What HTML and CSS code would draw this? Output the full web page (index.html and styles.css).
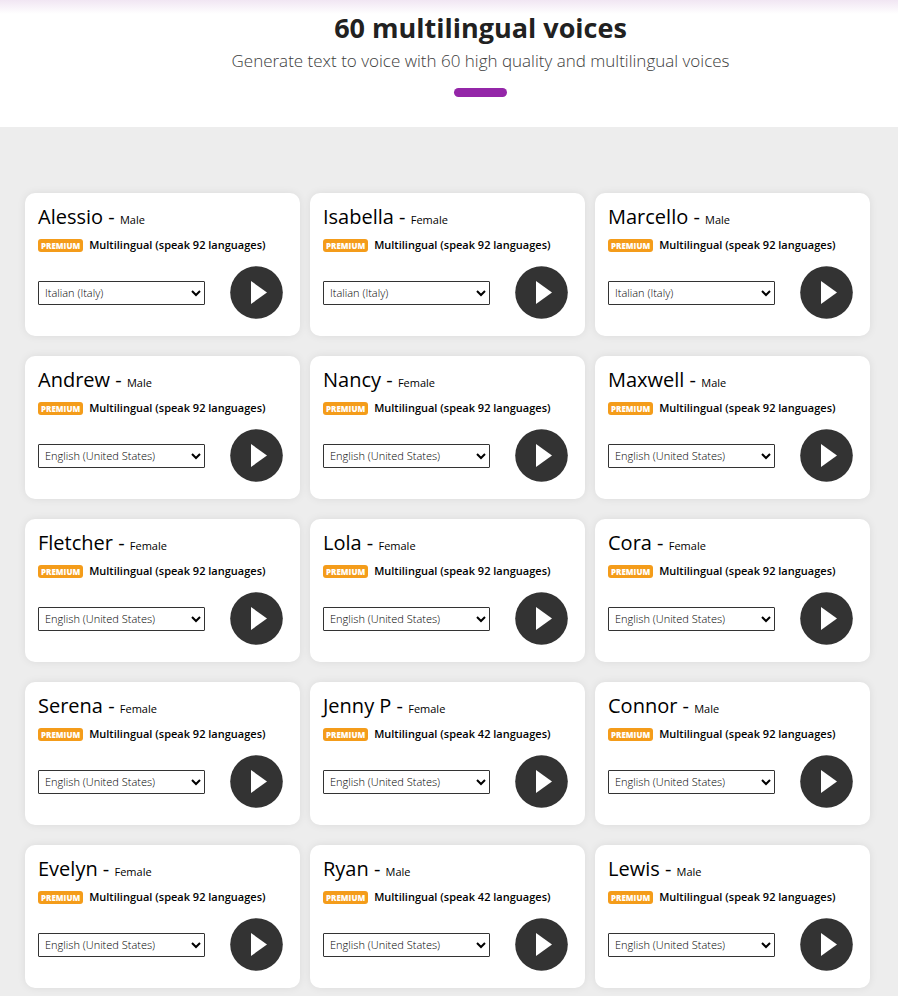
FILE: index.html
```html
<!DOCTYPE html>
<html lang="en">
<head>
    <meta charset="UTF-8">
    <meta name="viewport" content="width=device-width, initial-scale=1.0">
    <title>60 multilingual voices</title>
    <link rel="stylesheet" href="styles.css">
</head>
<body>

<header class="intro">
    <h1>60 multilingual voices</h1>
    <p>Generate text to voice with 60 high quality and multilingual voices</p>
    <div class="divider"></div>
</header>

<main class="voices">
    <div class="voice-grid" id="voice-grid"></div>
</main>

<script src="voices.js"></script>
</body>
</html>
```
FILE: styles.css
```css
* {
    box-sizing: border-box;
}
body {
    font-family: "Open Sans", sans-serif;
    margin: 0;
    background-color: #ededed;
    color: #000;
}
.intro {
    background: linear-gradient(#f1e6f3, #fff 14px);
    padding: 7px 0 30px 63px;
    text-align: center;
}
.intro h1 {
    margin: 0;
    font-size: 27px;
    font-weight: 700;
    line-height: 41px;
    color: #212121;
}
.intro p {
    margin: 0;
    font-size: 17px;
    font-weight: 300;
    line-height: 26px;
    color: #3c3c3c;
}
.divider {
    width: 53px;
    height: 9px;
    margin: 14px auto 0;
    border-radius: 5px;
    background-color: #9426a8;
}
.voices {
    padding: 66px 28px 20px 25px;
}
.voice-grid {
    display: grid;
    grid-template-columns: repeat(3, 1fr);
    gap: 20px 10px;
}
.voice-card {
    padding: 10px 17px 17px 13px;
    border-radius: 10px;
    background-color: #fff;
    box-shadow: 0 0 8px rgba(0, 0, 0, 0.08);
}
.voice-card h2 {
    margin: 0;
    font-size: 20px;
    font-weight: 400;
    line-height: 28px;
}
.voice-card h2 small {
    font-size: 11px;
}
.voice-info {
    display: flex;
    align-items: center;
    gap: 6px;
    margin: 1px 0 11px;
    font-size: 11px;
    font-weight: 600;
    line-height: 20px;
}
.premium {
    padding: 0 3px;
    border-radius: 3px;
    background-color: #f49c1a;
    color: #fff;
    font-size: 8px;
    font-weight: 800;
    line-height: 13px;
}
.voice-controls {
    display: flex;
    align-items: center;
    justify-content: space-between;
}
.voice-controls select {
    width: 167px;
    height: 24px;
    padding: 0 2px;
    border: 1px solid #333;
    border-radius: 1px;
    background-color: #fff;
    color: #000;
    font-family: inherit;
    font-size: 11px;
    font-weight: 300;
}
.play {
    display: block;
    padding: 0;
    border: 0;
    background: none;
    cursor: pointer;
}
.play svg {
    display: block;
    width: 53px;
    height: 53px;
}
```
FILE: voices.js
```js
const voices = [
    { name: 'Alessio', gender: 'Male', languages: 92, selected: 'Italian (Italy)' },
    { name: 'Isabella', gender: 'Female', languages: 92, selected: 'Italian (Italy)' },
    { name: 'Marcello', gender: 'Male', languages: 92, selected: 'Italian (Italy)' },
    { name: 'Andrew', gender: 'Male', languages: 92, selected: 'English (United States)' },
    { name: 'Nancy', gender: 'Female', languages: 92, selected: 'English (United States)' },
    { name: 'Maxwell', gender: 'Male', languages: 92, selected: 'English (United States)' },
    { name: 'Fletcher', gender: 'Female', languages: 92, selected: 'English (United States)' },
    { name: 'Lola', gender: 'Female', languages: 92, selected: 'English (United States)' },
    { name: 'Cora', gender: 'Female', languages: 92, selected: 'English (United States)' },
    { name: 'Serena', gender: 'Female', languages: 92, selected: 'English (United States)' },
    { name: 'Jenny P', gender: 'Female', languages: 42, selected: 'English (United States)' },
    { name: 'Connor', gender: 'Male', languages: 92, selected: 'English (United States)' },
    { name: 'Evelyn', gender: 'Female', languages: 92, selected: 'English (United States)' },
    { name: 'Ryan', gender: 'Male', languages: 42, selected: 'English (United States)' },
    { name: 'Lewis', gender: 'Male', languages: 92, selected: 'English (United States)' }
];

const grid = document.getElementById('voice-grid');

voices.forEach((voice) => {
    const card = document.createElement('article');
    card.className = 'voice-card';
    card.innerHTML = `
        <h2>${voice.name} - <small>${voice.gender}</small></h2>
        <div class="voice-info">
            <span class="premium">PREMIUM</span>
            <span>Multilingual (speak ${voice.languages} languages)</span>
        </div>
        <div class="voice-controls">
            <select aria-label="Language for ${voice.name}">
                <option>${voice.selected}</option>
            </select>
            <button type="button" class="play" aria-label="Play ${voice.name}">
                <svg viewBox="0 0 53 53" aria-hidden="true">
                    <circle cx="26.5" cy="26.5" r="26.3" fill="#333"/>
                    <path d="M21 15v23l16-11.5z" fill="#fff"/>
                </svg>
            </button>
        </div>
    `;
    grid.appendChild(card);
});
```
